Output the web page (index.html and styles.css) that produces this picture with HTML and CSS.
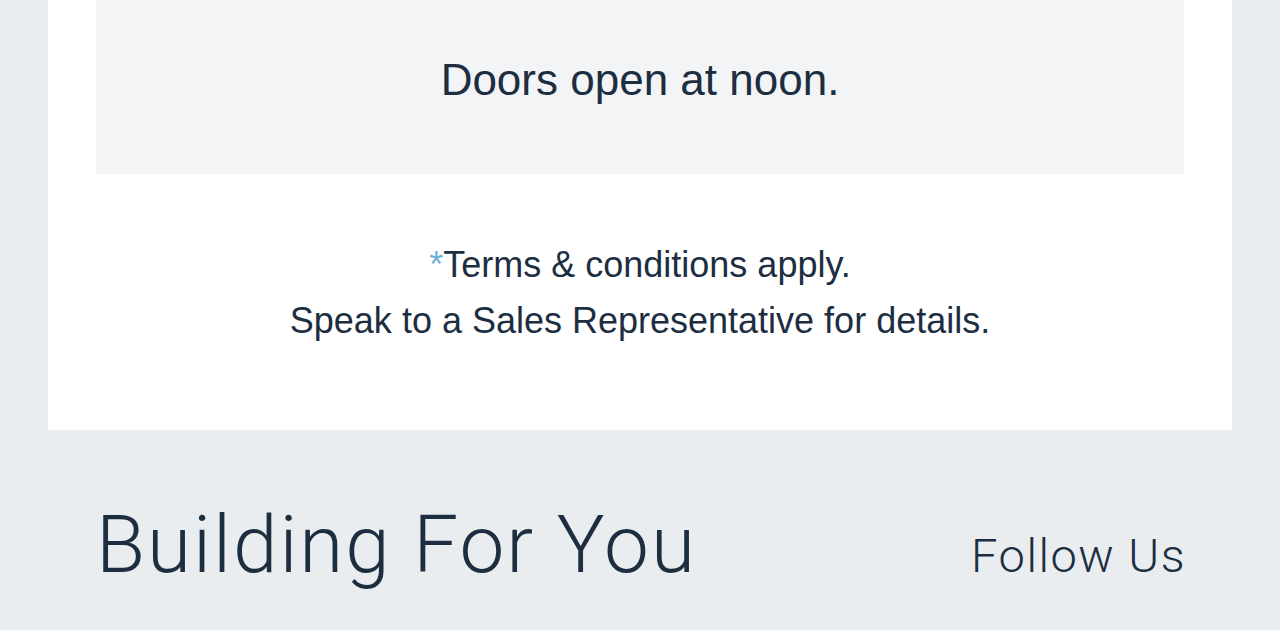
FILE: index.html
```html
<!DOCTYPE html>
<html>
<head>
  <title>Open House</title>
  <meta name="viewport" content="width=device-width, initial-scale=1">
  <link rel="stylesheet" href="styles.css">
</head>
<body>

  <div class="page">
    <!-- Offer card -->
    <div class="card">
      <div class="notice">
        <p>Doors open at noon.</p>
      </div>

      <div class="terms">
        <p><span class="star">*</span>Terms &amp; conditions apply.</p>
        <p>Speak to a Sales Representative for details.</p>
      </div>
    </div>

    <!-- Footer -->
    <div class="footer">
      <h2 class="brand">Building For You</h2>
      <h3 class="follow">Follow Us</h3>
    </div>
  </div>

</body>
</html>
```

FILE: styles.css
```css
body {
  font-family: 'Liberation Sans', Arial, sans-serif;
  margin: 0;
  background-color: #e9edf0;
  color: #1c2e3f;
}

p {
  margin: 0;
}

.page {
  padding: 0 48px;
}

.card {
  background-color: #fff;
  padding: 0 48px;
  height: 430px;
}

.notice {
  background-color: #f3f4f6;
  height: 174px;
  display: flex;
  justify-content: center;
  padding-top: 55px;
  box-sizing: border-box;
  font-size: 44px;
}

.terms {
  text-align: center;
  font-size: 36px;
  line-height: 56px;
  padding-top: 63px;
}

.star {
  color: #6fb0d8;
}

.footer {
  display: flex;
  justify-content: space-between;
  align-items: baseline;
  padding: 0 48px;
}

.brand {
  font-family: Roboto, 'Liberation Sans', sans-serif;
  font-weight: 300;
  font-size: 80px;
  letter-spacing: 2px;
  margin: 68px 0 0;
}

.follow {
  font-family: Roboto, 'Liberation Sans', sans-serif;
  font-weight: 300;
  font-size: 47px;
  letter-spacing: 1.5px;
  margin: 0 -2px 0 0;
}
```
